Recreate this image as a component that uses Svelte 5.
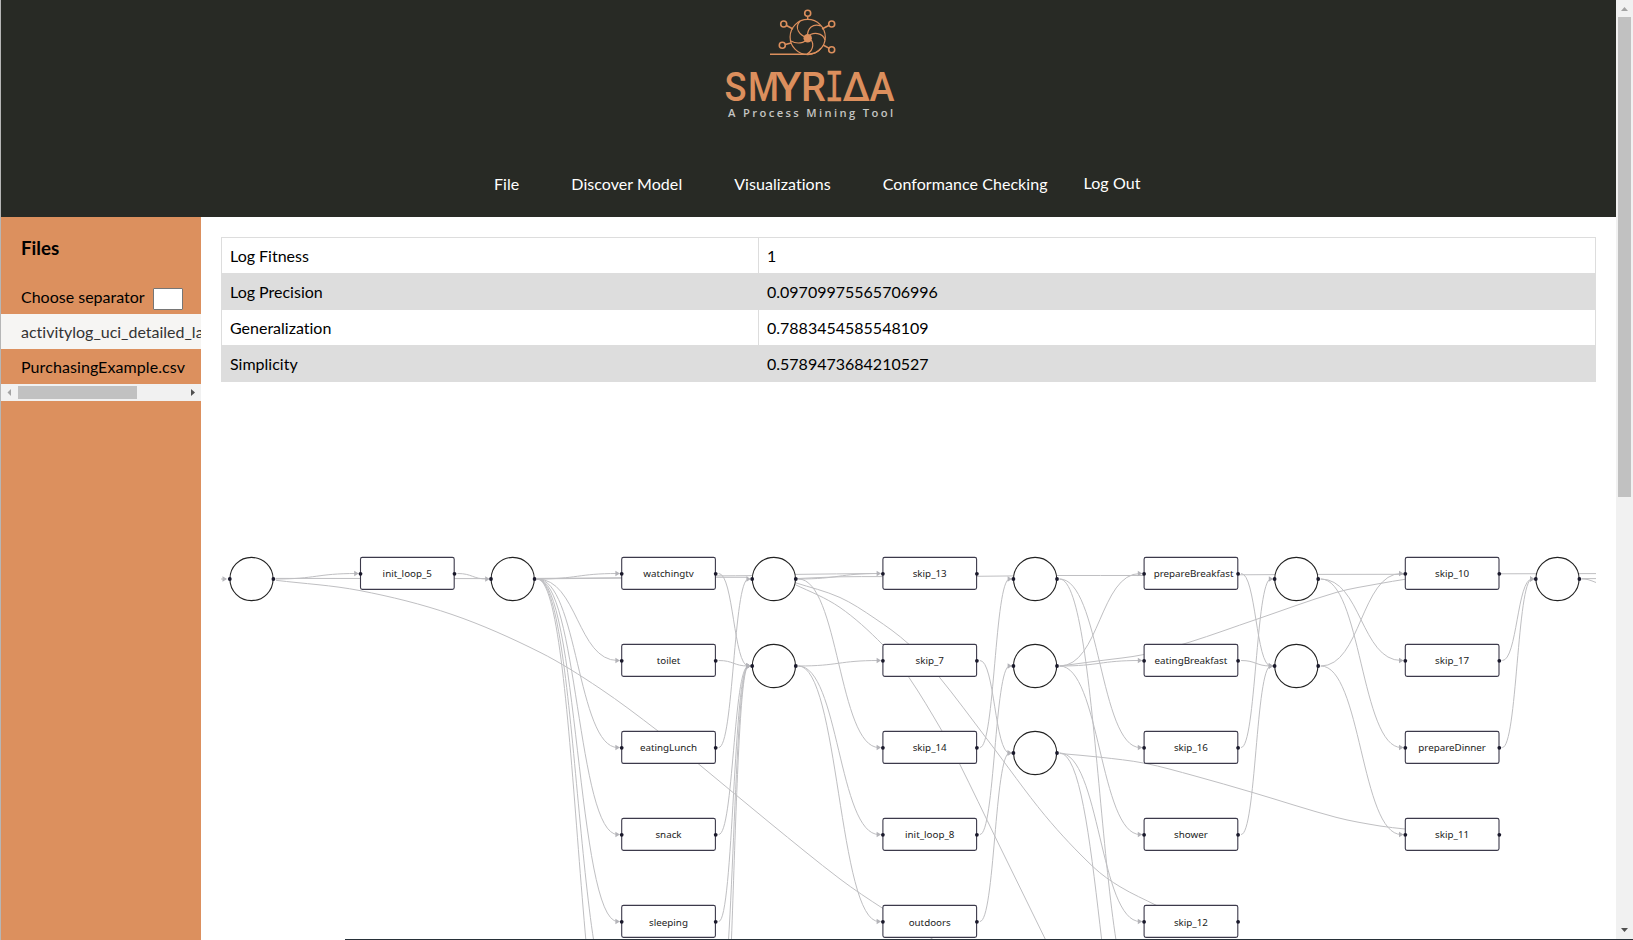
<script>
  const metrics = [
    ['Log Fitness', '1'],
    ['Log Precision', '0.09709975565706996'],
    ['Generalization', '0.7883454585548109'],
    ['Simplicity', '0.5789473684210527']
  ];

  const STEP = 261.2;
  const ROW = 87;
  const boxX = (c) => 360.5 + STEP * c;
  const boxY = (r) => 557.4 + ROW * r;
  const cirX = (c) => 251.5 + STEP * c;
  const cirY = (r) => 579 + ROW * r;

  const tasks = [
    ['init_loop_5', 0, 0],
    ['watchingtv', 1, 0], ['toilet', 1, 1], ['eatingLunch', 1, 2], ['snack', 1, 3], ['sleeping', 1, 4],
    ['skip_13', 2, 0], ['skip_7', 2, 1], ['skip_14', 2, 2], ['init_loop_8', 2, 3], ['outdoors', 2, 4],
    ['prepareBreakfast', 3, 0], ['eatingBreakfast', 3, 1], ['skip_16', 3, 2], ['shower', 3, 3], ['skip_12', 3, 4],
    ['skip_10', 4, 0], ['skip_17', 4, 1], ['prepareDinner', 4, 2], ['skip_11', 4, 3]
  ];
  const places = [[0, 0], [1, 0], [2, 0], [2, 1], [3, 0], [3, 1], [3, 2], [4, 0], [4, 1], [5, 0]];

  // place column, place row, task row
  const outgoing = [
    [0, 0, 0],
    [1, 0, 0], [1, 0, 1], [1, 0, 2], [1, 0, 3], [1, 0, 4], [1, 0, 5], [1, 0, 6],
    [2, 0, 0], [2, 0, 2], [2, 1, 1], [2, 1, 3], [2, 1, 4],
    [3, 0, 2], [3, 0, 5], [3, 1, 0], [3, 1, 1], [3, 1, 3], [3, 2, 4], [3, 2, 6],
    [4, 0, 1], [4, 0, 2], [4, 1, 0], [4, 1, 3]
  ];
  // task column, task row, place row
  const incoming = [
    [0, 0, 0],
    [1, 0, 1], [1, 1, 1], [1, 2, 0], [1, 3, 1], [1, 4, 1], [1, 5, 1], [1, 6, 1],
    [2, 1, 2], [2, 2, 0], [2, 3, 1], [2, 4, 2],
    [3, 0, 1], [3, 1, 1], [3, 2, 0], [3, 3, 1],
    [4, 1, 0], [4, 2, 0]
  ];

  const curve = (x1, y1, x2, y2) => {
    const m = (x1 + x2) / 2;
    return `M${x1} ${y1}C${m} ${y1} ${m} ${y2} ${x2} ${y2}`;
  };
  // Tangents follow the neighbouring points, scaled to each segment's own width.
  const spline = (p) => {
    const slope = p.map((_, i) => {
      const a = p[Math.max(i - 1, 0)], b = p[Math.min(i + 1, p.length - 1)];
      return (b[1] - a[1]) / (b[0] - a[0]);
    });
    let d = `M${p[0]}`;
    for (let i = 0; i < p.length - 1; i++) {
      const b = p[i], c = p[i + 1], h = (c[0] - b[0]) / 3;
      d += `C${b[0] + h} ${b[1] + h * slope[i]} ${c[0] - h} ${c[1] - h * slope[i + 1]} ${c}`;
    }
    return d;
  };

  const edges = [
    ...outgoing.map(([c, pr, tr]) => curve(cirX(c) + 24.5, cirY(pr), boxX(c) - 4, 573.5 + ROW * tr)),
    ...incoming.map(([c, tr, pr]) => curve(boxX(c) + 97, 573.5 + ROW * tr, cirX(c + 1) - 25.5, cirY(pr)))
  ];
  const long = [
    [[276, 578.4], [487, 578.6]],
    [[276, 580.3], [360, 590.6], [452, 614.5], [540, 652.3], [600, 688.5], [658, 731], [698, 763.5], [770, 823], [840, 879], [883, 908.5], [934, 940]],
    [[537, 578.8], [622, 578.2], [716, 577.3], [748, 577.3]],
    [[537, 578.4], [622, 577.7], [716, 575.9], [755, 575.6], [796, 574.4], [877, 573.5]],
    [[796, 578.6], [840, 576.8], [883, 576.6], [977, 576.3], [1057, 575.5], [1144, 575.5], [1238, 574.8], [1319, 574.4], [1405, 574.3], [1499, 573.8], [1596, 573.6]],
    [[780, 578], [795.3, 582.7], [840, 597.5], [875, 618.5], [909, 644.3], [939, 676.7], [987.7, 740], [1045, 815.5], [1093, 866.7], [1120, 886.7], [1157, 905.7]],
    [[780, 579], [795.3, 584.7], [840, 607.5], [883, 645], [909, 677.5], [942, 731], [959.3, 763.3], [996.7, 840], [1045.7, 940]],
    [[1060, 666], [1100, 660.7], [1144, 654.5], [1190, 642], [1256, 619.5], [1336, 592.5], [1380, 583.5], [1405, 579.3]],
    [[1060, 753.5], [1100, 757.2], [1145, 763.3], [1195, 776], [1252, 792.3], [1336, 817.3], [1380, 826], [1405, 829]],
    [[1582, 578.6], [1596, 578.6]],
    [[1582, 579], [1588, 579.6], [1596, 582.5]]
  ];
  const tips = [
    [225, 579],
    ...outgoing.map(([c, , tr]) => [boxX(c) - 3.8, 573.5 + ROW * tr]),
    ...incoming.map(([c, , pr]) => [cirX(c + 1) - 25, cirY(pr)])
  ];

  const brand = [
    ['S', 724.5, 22], ['M', 748, 31], ['Y', 775, 26.5], ['R', 801, 25], ['I', 824.5, 19.5], ['Δ', 842.5, 27.5], ['A', 869.5, 25]
  ];
  const spokes = [[807.7, 13.3, 807.7, 20], [783.7, 24, 793, 29], [831.7, 24, 822, 29], [782.3, 45.3, 791, 43], [831.7, 49.7, 823, 45]];
</script>

<div class="window">
  <div class="page">
    <header>
      <svg class="logo" width="220" height="130" viewBox="700 0 220 130">
        <g fill="none" stroke="#dc8f5d" stroke-width="1.2">
          <circle cx="807.7" cy="37" r="17.6" />
          <path d="M770 54.2h37q10 0 14-6" stroke-width="1.5" />
          {#each spokes as [x, y, x2, y2]}
            <path d="M{x} {y}L{x2} {y2}" stroke-width="1.5" />
            <circle cx={x} cy={y} r="3" fill="#282a25" stroke-width="1.6" />
          {/each}
          <path d="M807.5 38C799 35 794 28 800 21M807.5 37C807 28 813 23 821 26M807.5 37C813 31 823 33 825 40M808 38C815 41 814 50 807 54M807.500 38C805 44 796 44 791 41" />
        </g>
        <circle cx="807.7" cy="38.3" r="4.2" fill="#dc8f5d" />
        {#each brand as [ch, x, w]}
          <text class="brand" class:mono={ch === 'I'} {x} y="100.800" textLength={w} lengthAdjust="spacingAndGlyphs">{ch}</text>
        {/each}
        <text class="tagline" x="728" y="117.3" textLength="165">A Process Mining Tool</text>
      </svg>
      <nav>
        <a>File</a><a>Discover Model</a><a>Visualizations</a><a>Conformance Checking</a><a class="logout">Log Out</a>
      </nav>
    </header>
    <div class="body">
      <aside>
        <h3>Files</h3>
        <label><span>Choose separator</span><input /></label>
        <div class="files">
          <div class="file selected">activitylog_uci_detailed_labour.xes</div>
          <div class="file">PurchasingExample.csv</div>
          <div class="hbar">
            <svg width="17" height="17"><path d="M10 5v7L6.500 8.500z" fill="#a3a3a3" /></svg>
            <div class="hthumb"></div>
            <svg width="17" height="17"><path d="M7 5v7l4-3.500z" fill="#505050" /></svg>
          </div>
        </div>
      </aside>
      <main>
        <table>
          <tbody>
            {#each metrics as [name, value]}
              <tr><td class="name">{name}</td><td>{value}</td></tr>
            {/each}
          </tbody>
        </table>
        <svg class="graph" width="1375" height="400" viewBox="221 540 1375 400">
          <g class="edges">
            {#each edges as d}<path {d} />{/each}
            {#each long as p}<path d={spline(p)} />{/each}
          </g>
          {#each tips as [x, y]}<path class="tip" d="M{x - 2.5} {y - 2.7}L{x + 2} {y}L{x - 2.500} {y + 2.7}z" />{/each}
          <path class="stub" d="M221 579h4" />
          {#each tasks as [label, c, r]}
            <rect x={boxX(c)} y={boxY(r)} width="93.700" height="32" rx="1.800" />
            <text class="label" x={label === 'prepareBreakfast' ? boxX(c) + 49.5 : boxX(c) + 46.8} y={boxY(r) + (r === 4 ? 20.6 : 19.6)}>{label}</text>
            <circle class="port" cx={boxX(c)} cy={boxY(r) + 16.4} r="1.900" />
            <circle class="port" cx={boxX(c) + 94} cy={boxY(r) + 16.4} r="1.900" />
          {/each}
          {#each places as [c, r]}
            <circle class="place" cx={cirX(c)} cy={cirY(r)} r="21.600" />
            <circle class="port" cx={cirX(c) - 21.7} cy={cirY(r)} r="1.900" />
            <circle class="port" cx={cirX(c) + 21.9} cy={cirY(r)} r="1.900" />
          {/each}
        </svg>
      </main>
    </div>
  </div>
  <div class="vbar">
    <svg width="17" height="17"><path d="M5 11h7L8.500 7z" fill="#a3a3a3" /></svg>
    <div class="vthumb"></div>
    <svg class="down" width="17" height="17"><path d="M5 6h7l-3.500 4z" fill="#505050" /></svg>
  </div>
  <div class="edge-line"></div>
</div>

<style>
  :global(body) { margin: 0; overflow: hidden; background: #fff; }
  .window {
    position: relative; display: flex; box-sizing: border-box; width: 1633px; height: 940px;
    border-left: 1px solid #b6b6b6; overflow: hidden;
    font: 16px/19px Lato, sans-serif; font-variant-ligatures: none; color: #000; background: #fff;
  }
  .page { display: flex; flex-direction: column; width: 1615px; height: 940px; }
  header { display: flex; flex-direction: column; height: 217px; background: #282a25; }
  .logo { display: block; margin-left: 699px; }
  .brand { font: 500 41.5px Roboto, sans-serif; fill: #dc8f5d; }
  .brand.mono { font-family: 'DejaVu Sans Mono', monospace; font-size: 40.5px; stroke: #dc8f5d; stroke-width: 0.3; }
  .tagline { font: 600 11.2px 'Open Sans', sans-serif; fill: #c4c4c2; }
  nav { display: flex; align-items: flex-start; padding: 44px 0 0 493px; color: #fff; letter-spacing: 0.06px; }
  nav a { margin-right: 52px; white-space: nowrap; }
  nav a:nth-child(4) { margin-right: 36px; }
  nav .logout { margin: -1px 0 0; }
  .body { display: flex; flex: 1; min-height: 0; }
  aside { width: 200px; flex: none; background: #dc905e; overflow: hidden; }
  h3 { margin: 20px 0 0 20px; font-size: 18.720px; line-height: 23px; font-weight: 700; }
  label { display: flex; align-items: center; height: 22px; margin: 28px 0 4px 20px; }
  label span { margin-top: -5px; }
  input { box-sizing: border-box; width: 30px; height: 22px; margin: 0 0 0 8px; padding: 0; border: 1px solid #767676; border-radius: 1px; background: #fff; }
  .file { box-sizing: border-box; height: 35px; padding: 8px 0 8px 20px; overflow: hidden; white-space: nowrap; letter-spacing: 0.08px; }
  .selected { background: #f6f5f3; color: #333; letter-spacing: 0; }
  .hbar { display: flex; align-items: center; height: 17px; background: #f1f1f1; }
  .hthumb { width: 119px; height: 13px; margin-right: auto; background: #c1c1c1; }
  main { display: flex; flex-direction: column; padding: 20px 20px 0; width: 1375px; }
  table { width: 1375px; border-collapse: collapse; table-layout: fixed; }
  td { height: 19px; padding: 8px; border: 1px solid #ddd; }
  .name { width: 520px; }
  tr:nth-child(even) { background: #ddd; }
  .graph { display: block; margin-top: 158px; flex: none; }
  .edges path, .stub { fill: none; stroke: #bfbfc2; stroke-width: 1; }
  .tip { fill: #b3b3b8; }
  rect { fill: #fff; stroke: #3c3a4b; stroke-width: 1.1; }
  .place { fill: #fff; stroke: #222; stroke-width: 1.1; }
  .port { fill: #1a192b; }
  .label { font: 9.800px 'Noto Sans', sans-serif; text-anchor: middle; fill: #222; }
  .vbar { display: flex; flex-direction: column; align-items: center; width: 17px; height: 940px; background: #f1f1f1; }
  .vbar svg, .hbar svg { flex: none; display: block; }
  .vthumb { width: 13px; height: 480px; background: #c1c1c1; }
  .down { margin-top: auto; margin-bottom: 1px; }
  .edge-line { position: absolute; left: 344px; right: 0; bottom: 0; height: 1px; background: #273038; }
</style>
